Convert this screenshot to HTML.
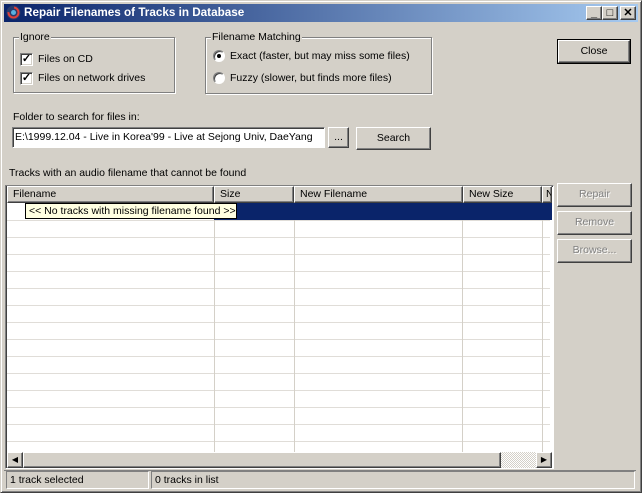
<!DOCTYPE html>
<html><head><style>
*{box-sizing:border-box;margin:0;padding:0}
body{width:642px;height:493px;background:#d4d0c8;font-family:"Liberation Sans",sans-serif;font-size:10.5px;color:#000;position:relative;overflow:hidden}
.a{position:absolute;white-space:nowrap}
.win{left:0;top:0;width:642px;height:493px;border:1px solid;border-color:#d4d0c8 #404040 #404040 #d4d0c8;box-shadow:inset 1px 1px #fff,inset -1px -1px #808080}
.title{left:4px;top:4px;width:634px;height:18px;background:linear-gradient(90deg,#0a246a,#a6caf0);color:#fff;font-weight:bold;font-size:11.7px;line-height:18px;padding-left:20px}
.tb{top:6px;width:16px;height:14px;background:#d4d0c8;border:1px solid;border-color:#fff #404040 #404040 #fff;box-shadow:inset -1px -1px #808080;font-size:11px;font-weight:bold;text-align:center;line-height:12px;color:#000}
.grp{border:1px solid #808080;box-shadow:1px 1px #fff,inset 1px 1px #fff}
.lg{background:#d4d0c8;padding:0 1px}
.cb{width:13px;height:13px;background:#fff;border:1px solid;border-color:#808080 #fff #fff #808080;box-shadow:inset 1px 1px #404040,inset -1px -1px #d4d0c8;font-size:11px;line-height:11px;text-align:center;font-weight:bold}
.rb{width:12px;height:12px;border-radius:50%;background:#fff;border:1px solid;border-color:#808080 #fff #fff #808080;box-shadow:inset 1px 1px #404040}
.btn{border:1px solid;border-color:#fff #404040 #404040 #fff;box-shadow:inset -1px -1px #808080;text-align:center;background:#d4d0c8}
.dis{color:#808080;text-shadow:1px 1px #fff}
.sunk{border:1px solid;border-color:#808080 #fff #fff #808080;box-shadow:inset 1px 1px #404040}
.hd{top:186px;height:17px;border:1px solid;border-color:#fff #404040 #404040 #fff;box-shadow:inset -1px -1px #808080;padding-left:5px;line-height:15px;background:#d4d0c8}
.row{left:7px;width:543px;height:1px;background:#e0ddd8}
.col{top:203px;width:1px;height:249px;background:#d4d0c8}
</style></head><body>
<div class="a win"></div>
<div class="a title">Repair Filenames of Tracks in Database</div>
<svg class="a" style="left:6px;top:5px" width="15" height="15" viewBox="0 0 15 15"><circle cx="7.5" cy="7.5" r="7" fill="#2a3a6a"/><circle cx="7.5" cy="7.5" r="5" fill="none" stroke="#e0403a" stroke-width="2" stroke-dasharray="16 8"/><circle cx="7.5" cy="7.5" r="2.5" fill="#5ab0e0"/></svg>
<div class="a tb" style="left:586px">_</div>
<div class="a tb" style="left:602px">□</div>
<div class="a tb" style="left:620px">✕</div>

<div class="a grp" style="left:13px;top:37px;width:162px;height:56px"></div>
<div class="a lg" style="left:19px;top:31px">Ignore</div>
<div class="a cb" style="left:20px;top:53px">✓</div><div class="a" style="left:38px;top:53px">Files on CD</div>
<div class="a cb" style="left:20px;top:72px">✓</div><div class="a" style="left:38px;top:72px">Files on network drives</div>

<div class="a grp" style="left:205px;top:37px;width:227px;height:57px"></div>
<div class="a lg" style="left:211px;top:31px">Filename Matching</div>
<div class="a rb" style="left:213px;top:50px"><div style="width:4px;height:4px;background:#000;border-radius:50%;margin:3px"></div></div>
<div class="a" style="left:230px;top:50px">Exact (faster, but may miss some files)</div>
<div class="a rb" style="left:213px;top:72px"></div>
<div class="a" style="left:230px;top:72px">Fuzzy (slower, but finds more files)</div>

<div class="a btn" style="left:558px;top:40px;width:72px;height:23px;line-height:20px;outline:1px solid #000">Close</div>

<div class="a" style="left:13px;top:111px">Folder to search for files in:</div>
<div class="a sunk" style="left:12px;top:127px;width:313px;height:21px;background:#fff;padding:3px 2px;overflow:hidden">E:\1999.12.04 - Live in Korea'99 - Live at Sejong Univ, DaeYang</div>
<div class="a btn" style="left:328px;top:127px;width:21px;height:21px;line-height:19px">...</div>
<div class="a btn" style="left:356px;top:127px;width:75px;height:23px;line-height:20px">Search</div>

<div class="a" style="left:9px;top:167px">Tracks with an audio filename that cannot be found</div>

<div class="a sunk" style="left:5px;top:185px;width:549px;height:284px;background:#fff"></div>
<div class="a hd" style="left:7px;width:207px">Filename</div>
<div class="a hd" style="left:214px;width:80px">Size</div>
<div class="a hd" style="left:294px;width:169px">New Filename</div>
<div class="a hd" style="left:463px;width:79px">New Size</div>
<div class="a hd" style="left:542px;width:10px;overflow:hidden;padding-left:3px">N</div>
<div class="a" style="left:214px;top:203px;width:338px;height:17px;background:#0a246a"></div>
<div class="a" style="left:25px;top:203px;width:212px;height:16px;background:#ffffe1;border:1px solid #000;padding-left:3px;line-height:14px">&lt;&lt; No tracks with missing filename found &gt;&gt;</div>
<div class="a row" style="top:220px"></div><div class="a row" style="top:237px"></div><div class="a row" style="top:254px"></div><div class="a row" style="top:271px"></div><div class="a row" style="top:288px"></div><div class="a row" style="top:305px"></div><div class="a row" style="top:322px"></div><div class="a row" style="top:339px"></div><div class="a row" style="top:356px"></div><div class="a row" style="top:373px"></div><div class="a row" style="top:390px"></div><div class="a row" style="top:407px"></div><div class="a row" style="top:424px"></div><div class="a row" style="top:441px"></div>
<div class="a col" style="left:214px;top:220px;height:232px"></div>
<div class="a col" style="left:294px;top:220px;height:232px"></div>
<div class="a col" style="left:462px;top:220px;height:232px"></div>
<div class="a col" style="left:542px;top:220px;height:232px"></div>

<div class="a" style="left:7px;top:452px;width:545px;height:16px;background:repeating-conic-gradient(#d4d0c8 0 25%,#fff 0 50%) 0 0/2px 2px"></div>
<div class="a btn" style="left:7px;top:452px;width:16px;height:16px;font-size:8px;line-height:14px">◀</div>
<div class="a btn" style="left:23px;top:452px;width:478px;height:16px"></div>
<div class="a btn" style="left:536px;top:452px;width:16px;height:16px;font-size:8px;line-height:14px">▶</div>

<div class="a btn dis" style="left:557px;top:183px;width:75px;height:24px;line-height:21px">Repair</div>
<div class="a btn dis" style="left:557px;top:211px;width:75px;height:24px;line-height:21px">Remove</div>
<div class="a btn dis" style="left:557px;top:239px;width:75px;height:24px;line-height:21px">Browse...</div>

<div class="a" style="left:4px;top:470px;width:632px;height:1px;background:#808080"></div>
<div class="a" style="left:6px;top:471px;width:143px;height:18px;border:1px solid;border-color:#808080 #fff #fff #808080;padding:2px 3px">1 track selected</div>
<div class="a" style="left:151px;top:471px;width:484px;height:18px;border:1px solid;border-color:#808080 #fff #fff #808080;padding:2px 3px">0 tracks in list</div>
</body></html>
